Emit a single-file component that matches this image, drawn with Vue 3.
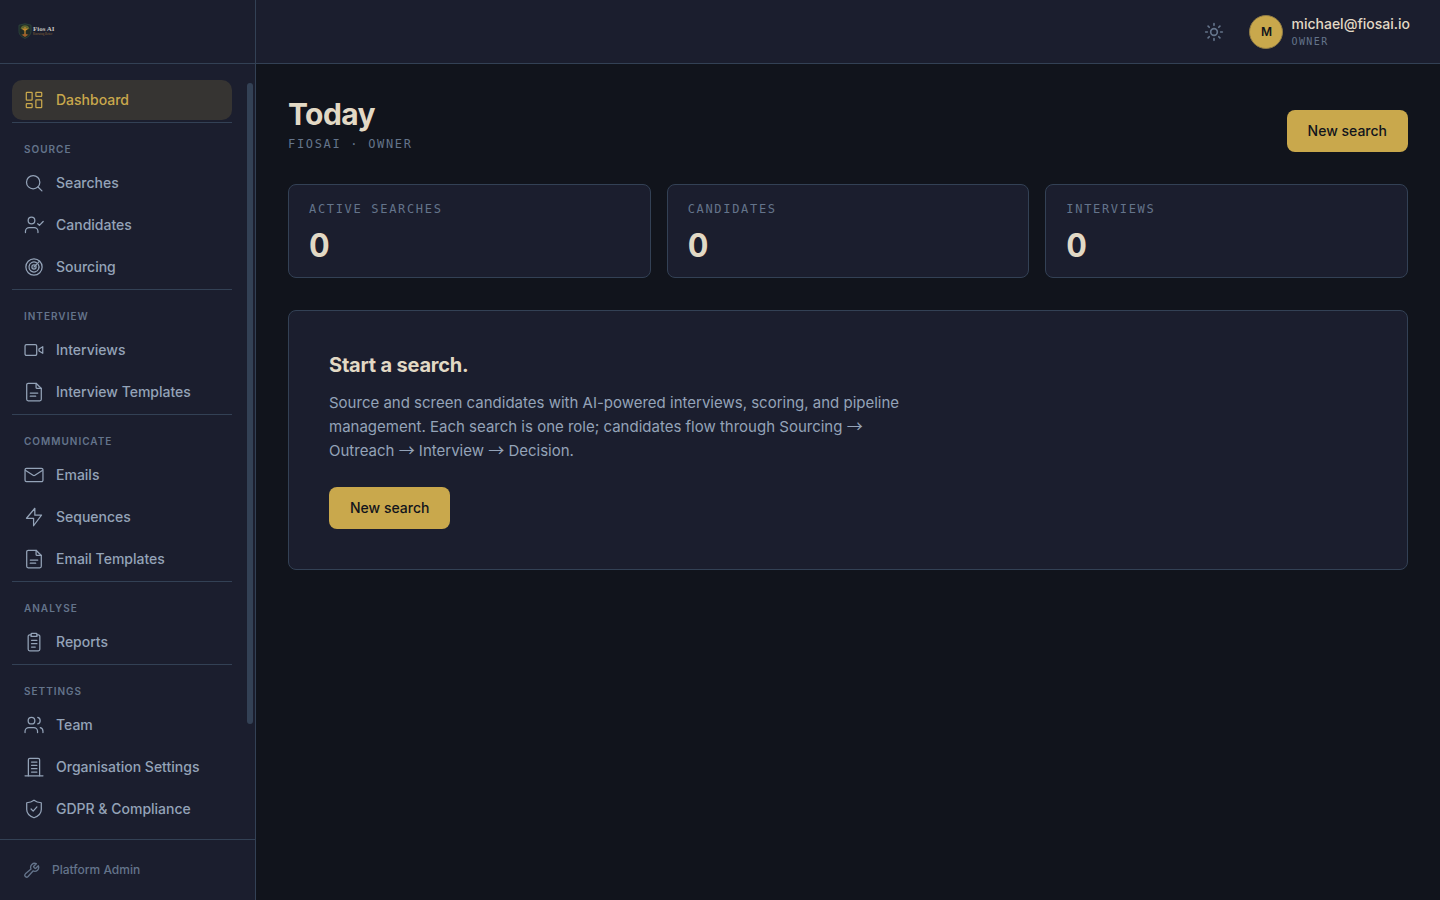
<template>
  <div class="shell">
    <aside class="sidebar">
      <a class="brand" href="#" aria-label="Fios AI">
        <svg class="brand-mark" viewBox="0 0 14 16">
          <path d="M1 2.2 7 .8l6 1.4v6.3c0 3.2-2.6 5.4-6 6.9-3.4-1.5-6-3.7-6-6.9z" fill="#1f2b26" stroke="#2f4a40" stroke-width=".8" />
          <path d="M2.6 5.8C2.8 3.4 5 2.3 7 2.3s4.2 1.1 4.4 3.5c-1.2 1-2.7.6-4.4.6s-3.2.4-4.4-.6z" fill="#5c6530" />
          <path d="M7 4v8M7 7.5 4.5 5.5M7 7.5l2.5-2" stroke="#c98a2f" stroke-width="1.2" fill="none" />
          <path d="M3 11.3c1.5.6 2.500-.6 4-.6s2.500 1.200 4 .6L7 14z" fill="#a0602c" />
        </svg>
        <span class="brand-text">
          <span class="brand-name">Fios AI</span>
          <span class="brand-tag">Knowing Better</span>
        </span>
      </a>

      <div class="nav-wrap">
        <nav class="nav">
          <div v-for="group in groups" :key="group.label" class="group">
            <h2 v-if="group.label" class="group-label">{{ group.label }}</h2>
            <a v-for="item in group.items" :key="item.name" href="#" class="nav-item" :class="{ active: item.active }">
              <svg class="icon" viewBox="0 0 24 24"><path v-for="d in icons[item.icon]" :key="d" :d="d" /></svg>
              <span>{{ item.name }}</span>
            </a>
          </div>
        </nav>
        <div class="rail"><div class="thumb"></div></div>
      </div>

      <div class="side-foot">
        <a href="#" class="admin">
          <svg class="icon small" viewBox="0 0 24 24"><path v-for="d in icons.wrench" :key="d" :d="d" /></svg>
          <span>Platform Admin</span>
        </a>
      </div>
    </aside>

    <div class="page">
      <header class="topbar">
        <button class="theme" type="button" aria-label="Toggle theme">
          <svg class="icon" viewBox="0 0 24 24"><path v-for="d in icons.sun" :key="d" :d="d" /></svg>
        </button>
        <button class="user" type="button">
          <span class="avatar">M</span>
          <span class="user-text">
            <span class="email">michael@fiosai.io</span>
            <span class="role">OWNER</span>
          </span>
        </button>
      </header>

      <main class="content">
        <div class="page-head">
          <div>
            <h1>Today</h1>
            <p class="mono">FIOSAI · OWNER</p>
          </div>
          <button class="btn" type="button">New search</button>
        </div>

        <div class="stats">
          <div v-for="s in stats" :key="s.label" class="stat">
            <div class="mono">{{ s.label }}</div>
            <div class="value">{{ s.value }}</div>
          </div>
        </div>

        <section class="panel">
          <h3>Start a search.</h3>
          <p>
            Source and screen candidates with AI-powered interviews, scoring, and pipeline management.
            Each search is one role; candidates flow through Sourcing <span class="arrow">→</span>
            Outreach <span class="arrow">→</span> Interview <span class="arrow">→</span> Decision.
          </p>
          <button class="btn" type="button">New search</button>
        </section>
      </main>
    </div>
  </div>
</template>

<script setup>
const groups = [
  { label: '', items: [{ name: 'Dashboard', icon: 'dashboard', active: true }] },
  {
    label: 'SOURCE',
    items: [
      { name: 'Searches', icon: 'search' },
      { name: 'Candidates', icon: 'userCheck' },
      { name: 'Sourcing', icon: 'radar' },
    ],
  },
  {
    label: 'INTERVIEW',
    items: [
      { name: 'Interviews', icon: 'video' },
      { name: 'Interview Templates', icon: 'file' },
    ],
  },
  {
    label: 'COMMUNICATE',
    items: [
      { name: 'Emails', icon: 'mail' },
      { name: 'Sequences', icon: 'bolt' },
      { name: 'Email Templates', icon: 'file' },
    ],
  },
  { label: 'ANALYSE', items: [{ name: 'Reports', icon: 'clipboard' }] },
  {
    label: 'SETTINGS',
    items: [
      { name: 'Team', icon: 'users' },
      { name: 'Organisation Settings', icon: 'building' },
      { name: 'GDPR & Compliance', icon: 'shield' },
    ],
  },
]

const stats = [
  { label: 'ACTIVE SEARCHES', value: 0 },
  { label: 'CANDIDATES', value: 0 },
  { label: 'INTERVIEWS', value: 0 },
]

const icons = {
  dashboard: [
    'M3.5 2.75h5.5a.75.75 0 0 1 .75.75v8a.75.75 0 0 1-.75.75H3.5a.75.75 0 0 1-.75-.75v-8a.75.75 0 0 1 .75-.75z',
    'M15 2.75h5.5a.75.75 0 0 1 .75.75V7a.75.75 0 0 1-.75.75H15a.75.75 0 0 1-.75-.75V3.5a.75.75 0 0 1 .75-.75z',
    'M15 11.75h5.5a.75.75 0 0 1 .75.75v8a.75.75 0 0 1-.75.75H15a.75.75 0 0 1-.75-.75v-8a.75.75 0 0 1 .75-.75z',
    'M3.5 16.25h5.5a.75.75 0 0 1 .75.75v3.5a.75.75 0 0 1-.75.75H3.5a.75.75 0 0 1-.75-.75V17a.75.75 0 0 1 .75-.75z',
  ],
  search: ['M11 3a8 8 0 1 0 0 16 8 8 0 0 0 0-16z', 'M16.8 16.8 21.5 21.5'],
  userCheck: [
    'M9 2.5a4 4 0 1 0 0 8 4 4 0 0 0 0-8z',
    'M1.75 21v-1.5A4.5 4.5 0 0 1 6.25 15h6a4.5 4.5 0 0 1 4.5 4.5V21',
    'M16.5 10.5l2 2 4.5-4.7',
  ],
  radar: [
    'M12 2.25a9.75 9.75 0 1 0 0 19.5 9.75 9.75 0 0 0 0-19.5z',
    'M17 8.7A6 6 0 1 1 14.8 6.7',
    'M12 9.5a2.5 2.5 0 1 0 0 5 2.5 2.5 0 0 0 0-5z',
    'M12 12l6.7-7',
  ],
  video: [
    'M3 5.5h10.5a1.75 1.75 0 0 1 1.75 1.75v9.5a1.75 1.75 0 0 1-1.75 1.75H3a1.75 1.75 0 0 1-1.75-1.75v-9.5A1.75 1.75 0 0 1 3 5.5z',
    'M22.5 8v8l-4.5-2.8v-2.4z',
  ],
  file: [
    'M14.5 1.5H5A1.75 1.75 0 0 0 3.25 3.25v17.5c0 .97.78 1.75 1.75 1.75h14a1.75 1.75 0 0 0 1.75-1.75V7.75z',
    'M14.5 1.5V6.5c0 .7.55 1.25 1.25 1.25h5',
    'M7.5 13.25h9',
    'M7.5 17h6.5',
  ],
  mail: [
    'M3 4h18a1.75 1.75 0 0 1 1.75 1.75v12.5A1.75 1.75 0 0 1 21 20H3a1.75 1.75 0 0 1-1.75-1.75V5.75A1.75 1.75 0 0 1 3 4z',
    'M2 6.5l8.9 5.8c.7.45 1.5.45 2.2 0L22 6.5',
  ],
  bolt: ['M13 1.5 3 13.5h8.5v9L21 9.75h-8z'],
  clipboard: [
    'M8.5 3.5H7A1.75 1.75 0 0 0 5 5.25v15.5c0 .97.78 1.75 1.75 1.75h10.5A1.75 1.75 0 0 0 19 20.75V5.25A1.75 1.75 0 0 0 17 3.5h-1.5',
    'M9.5 1.5h5a1 1 0 0 1 1 1v2.75H8.5V2.5a1 1 0 0 1 1-1z',
    'M9 10h6.5',
    'M9 14h6.5',
    'M9 18h4.5',
  ],
  users: [
    'M9 2.75a4 4 0 1 0 0 8 4 4 0 0 0 0-8z',
    'M1.25 21v-1.5A4.5 4.5 0 0 1 5.75 15h6a4.5 4.5 0 0 1 4.5 4.5V21',
    'M16.5 2.9a4 4 0 0 1 0 7.7',
    'M19.5 15.2a4.5 4.5 0 0 1 3.25 4.3V21',
  ],
  building: [
    'M1.25 22.5h21.5',
    'M5.25 22.5V3.25A1.75 1.75 0 0 1 7 1.5h10a1.75 1.75 0 0 1 1.75 1.75V22.5',
    'M9 6h6.5',
    'M9 10h6.5',
    'M9 14h6.5',
    'M9 18h6.5',
  ],
  shield: [
    'M12 1.5c2.5 2 5 2.8 8.75 3v8c0 4.7-3.5 8-8.75 10-5.25-2-8.75-5.3-8.75-10v-8C7 4.3 9.5 3.5 12 1.5z',
    'M8.5 12l2.5 2.5 4.5-5',
  ],
  sun: [
    'M12 8a4 4 0 1 0 0 8 4 4 0 0 0 0-8z',
    'M12 2v2M12 20v2M2 12h2M20 12h2M4.9 4.9l1.4 1.4M17.7 17.7l1.4 1.4M4.9 19.1l1.4-1.4M17.7 6.3l1.4-1.4',
  ],
  wrench: [
    'M14.7 6.3a1 1 0 0 0 0 1.4l1.6 1.6a1 1 0 0 0 1.4 0l3.77-3.77a6 6 0 0 1-7.94 7.94l-7.41 8.31a2.56 2.56 0 0 1-4-4l8.41-7.31a6 6 0 0 1 7.94-7.94z',
  ],
}
</script>

<style>
body { margin: 0; background: #11141c; }
</style>

<style scoped>
* { box-sizing: border-box; }
h1, h2, h3, p { margin: 0; }
a { text-decoration: none; color: inherit; }
button { font: inherit; color: inherit; background: none; border: 0; padding: 0; cursor: pointer; }

.shell {
  display: flex;
  height: 100vh;
  background: #11141c;
  color: #e2d9c5;
  font-family: Inter, "Liberation Sans", sans-serif;
  font-size: 14px;
  line-height: 20px;
}

.icon {
  width: 20px;
  height: 20px;
  flex: none;
  fill: none;
  stroke: currentColor;
  stroke-width: 1.5;
  stroke-linecap: round;
  stroke-linejoin: round;
}
.icon.small { width: 16px; height: 16px; stroke-width: 2; }

/* sidebar */
.sidebar {
  display: flex;
  flex-direction: column;
  flex: none;
  width: 256px;
  background: #1b1e2e;
  border-right: 1px solid #334155;
}
.brand {
  display: flex;
  align-items: center;
  flex: none;
  gap: 1px;
  height: 64px;
  padding: 0 18px 2px;
  border-bottom: 1px solid #334155;
}
.brand-mark { width: 14px; height: 16px; }
.brand-text { display: flex; flex-direction: column; font-family: "Liberation Serif", serif; }
.brand-name { font-size: 7px; line-height: 8px; font-weight: 700; color: #c4c2c0; }
.brand-tag { font-size: 3px; line-height: 3px; color: #8a6238; }

.nav-wrap { display: flex; flex: 1; min-height: 0; }
.nav { flex: 1; padding: 16px 12px 0; overflow: hidden; }
.group + .group { border-top: 1px solid #334155; }
.group-label {
  padding: 18px 12px 6px;
  font-size: 10px;
  line-height: 16px;
  font-weight: 600;
  letter-spacing: 1px;
  color: #64748b;
}
.nav-item {
  display: flex;
  align-items: center;
  gap: 12px;
  height: 40px;
  margin-bottom: 2px;
  padding: 0 12px;
  border-radius: 10px;
  font-weight: 500;
  color: #94a3b8;
}
.nav-item.active { background: #363432; color: #c9a84c; }
.rail { flex: none; width: 11px; padding: 19px 2px 0 3px; }
.thumb { height: 84.8%; border-radius: 3px; background: #334155; }

.side-foot { flex: none; padding: 10px 12px; border-top: 1px solid #334155; }
.admin {
  display: flex;
  align-items: center;
  gap: 12px;
  height: 40px;
  padding: 0 12px;
  font-size: 12px;
  line-height: 16px;
  font-weight: 500;
  color: #64748b;
}

/* top bar */
.page { display: flex; flex-direction: column; flex: 1; min-width: 0; }
.topbar {
  display: flex;
  align-items: center;
  justify-content: flex-end;
  flex: none;
  gap: 16px;
  height: 64px;
  padding: 0 30px;
  background: #1b1e2e;
  border-bottom: 1px solid #334155;
}
.theme { display: flex; padding: 9px; color: #64748b; }
.theme .icon { stroke-width: 2; }
.user { display: flex; align-items: center; gap: 8px; text-align: left; }
.avatar {
  display: flex;
  align-items: center;
  justify-content: center;
  width: 34px;
  height: 34px;
  border: 1px solid #8f7b46;
  border-radius: 50%;
  background: #c9a84c;
  color: #11141c;
  font-size: 12px;
  font-weight: 600;
}
.user-text { display: flex; flex-direction: column; }
.email { font-weight: 500; }
.role {
  font-family: "DejaVu Sans Mono", monospace;
  font-size: 10px;
  line-height: 15px;
  letter-spacing: 0.14em;
  color: #64748b;
}

/* content */
.content { flex: 1; padding: 32px; }
.mono {
  font-family: "DejaVu Sans Mono", monospace;
  font-size: 12px;
  line-height: 16px;
  letter-spacing: 0.14em;
  color: #64748b;
}
.page-head { display: flex; align-items: flex-end; justify-content: space-between; margin-bottom: 32px; }
h1 { margin-bottom: 4px; font-size: 30px; line-height: 36px; font-weight: 700; letter-spacing: -0.02em; }
.btn {
  height: 42px;
  padding: 0 21px;
  border-radius: 8px;
  background: #c9a84c;
  color: #11141c;
  font-weight: 500;
}
.stats { display: grid; grid-template-columns: repeat(3, 1fr); gap: 16px; margin-bottom: 32px; }
.stat {
  padding: 16px 20px 10px;
  border: 1px solid #334155;
  border-radius: 8px;
  background: #1b1e2e;
}
.value {
  margin-top: 8px;
  font-size: 32px;
  line-height: 42px;
  font-weight: 700;
  font-variant-numeric: tabular-nums;
}
.panel {
  padding: 40px;
  border: 1px solid #334155;
  border-radius: 8px;
  background: #1b1e2e;
}
.panel h3 { margin-bottom: 12px; font-size: 20px; line-height: 28px; font-weight: 700; letter-spacing: -0.01em; }
.panel p { max-width: 576px; margin-bottom: 24px; font-size: 15px; line-height: 24px; color: #94a3b8; }
.arrow { font-family: "Noto Sans CJK SC", sans-serif; font-size: 16px; line-height: 16px; }
</style>
